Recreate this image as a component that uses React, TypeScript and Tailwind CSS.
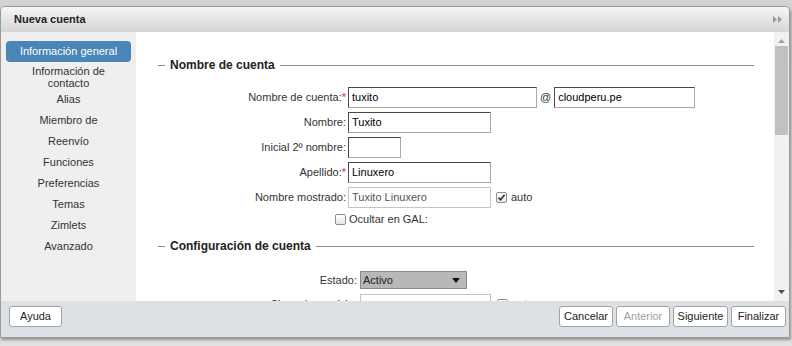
import type { ReactNode } from "react";

const navItems = [
  "Alias",
  "Miembro de",
  "Reenvío",
  "Funciones",
  "Preferencias",
  "Temas",
  "Zimlets",
  "Avanzado",
];

function Legend({ children }: { children: ReactNode }) {
  return (
    <div className="flex h-[14px] items-center">
      <div className="h-px w-[7px] bg-[#8c8c8c]" />
      <div className="px-[5px] text-[12px] font-bold leading-[14px] text-[#222]">
        {children}
      </div>
      <div className="h-px flex-1 bg-[#8c8c8c]" />
    </div>
  );
}

function TextBox({
  width,
  value,
  muted,
}: {
  width: string;
  value?: string;
  muted?: boolean;
}) {
  return (
    <div
      className={`flex h-[21px] items-center border pl-[3px] ${width} ${
        muted
          ? "border-[#c4c4c4] text-[#555]"
          : "border-[#a9a9a9] border-t-[#4a4a4a] border-l-[#4a4a4a] text-black"
      } bg-white`}
    >
      {value}
    </div>
  );
}

function Check({ checked }: { checked?: boolean }) {
  return (
    <span className="relative inline-flex h-[11px] w-[11px] shrink-0 items-center justify-center rounded-[2px] border border-[#8e8e8e] bg-gradient-to-b from-white to-[#e6e6e6]">
      {checked ? (
        <svg width="9" height="9" viewBox="0 0 9 9">
          <path
            d="M1.5 4.6 L3.6 6.8 L7.6 1.8"
            fill="none"
            stroke="#333"
            strokeWidth="1.6"
          />
        </svg>
      ) : null}
    </span>
  );
}

function Row({
  label,
  required,
  children,
}: {
  label: string;
  required?: boolean;
  children: ReactNode;
}) {
  return (
    <div className="mb-[4px] flex h-[21px] items-center">
      <div className="w-[188px] text-right text-[#333]">
        {label}
        {required ? <span className="text-[#d0302b]">*</span> : null}
      </div>
      <div className="ml-[2px] flex items-center">{children}</div>
    </div>
  );
}

function Button({
  children,
  width,
  disabled,
}: {
  children: ReactNode;
  width: string;
  disabled?: boolean;
}) {
  return (
    <div
      className={`flex h-[21px] items-center justify-center rounded-[3px] border border-[#a3a3a3] bg-white ${width} ${
        disabled ? "text-[#a0a0a0]" : "text-[#222]"
      }`}
    >
      {children}
    </div>
  );
}

export default function App() {
  return (
    <div
      className="h-[346px] w-[792px] overflow-hidden bg-gradient-to-b from-[#d2d2d2] to-[#e2e2e2] pt-[6px] text-[11px] leading-[13px] text-[#333]"
      style={{ fontFamily: '"Liberation Sans", Arial, sans-serif' }}
    >
      <div className="flex h-[332px] w-[790px] flex-col overflow-hidden rounded-t-[5px] border border-[#9a9a9a] shadow-[1px_2px_3px_rgba(0,0,0,0.35)]">
        {/* header */}
        <div className="flex h-[25px] shrink-0 items-center justify-between bg-gradient-to-b from-[#f6f6f6] to-[#d5d5d5] pl-[13px] pr-[7px]">
          <span className="font-bold text-[#222]">Nueva cuenta</span>
          <svg width="9" height="7" viewBox="0 0 9 7">
            <path d="M0 0 L4 3.5 L0 7 Z M5 0 L9 3.5 L5 7 Z" fill="#9a9a9a" />
          </svg>
        </div>

        {/* body */}
        <div className="flex h-[269px] shrink-0">
          <div className="w-[135px] shrink-0 bg-[#efefef] px-[5px] pt-[9px] text-center text-[#333]">
            <div className="flex h-[21px] items-center justify-center rounded-[4px] bg-[#4a85b7] text-white">
              Información general
            </div>
            <div className="h-[27px] pt-[3px] leading-[12px]">
              Información de
              <br />
              contacto
            </div>
            {navItems.map((item) => (
              <div key={item} className="flex h-[21px] items-center justify-center">
                {item}
              </div>
            ))}
          </div>

          <div className="flex-1 overflow-hidden bg-white pl-[22px] pr-[20px] pt-[26px]">
            <Legend>Nombre de cuenta</Legend>
            <div className="mt-[15px]">
              <Row label="Nombre de cuenta:" required>
                <TextBox width="w-[189px]" value="tuxito" />
                <span className="mx-[3px] text-[#333]">@</span>
                <TextBox width="w-[141px]" value="cloudperu.pe" />
              </Row>
              <Row label="Nombre:">
                <TextBox width="w-[143px]" value="Tuxito" />
              </Row>
              <Row label="Inicial 2º nombre:">
                <TextBox width="w-[53px]" />
              </Row>
              <Row label="Apellido:" required>
                <TextBox width="w-[143px]" value="Linuxero" />
              </Row>
              <Row label="Nombre mostrado:">
                <TextBox width="w-[143px]" value="Tuxito Linuxero" muted />
                <span className="ml-[5px] flex items-center gap-[4px]">
                  <Check checked />
                  auto
                </span>
              </Row>
              <div className="flex h-[14px] items-center">
                <div className="flex w-[188px] justify-end">
                  <Check />
                </div>
                <span className="ml-[3px]">Ocultar en GAL:</span>
              </div>
            </div>

            <div className="mt-[13px]">
              <Legend>Configuración de cuenta</Legend>
            </div>
            <div className="mt-[18px] flex h-[18px] items-center">
              <div className="w-[199px] text-right">Estado:</div>
              <div className="ml-[3px] flex h-[18px] w-[107px] items-center justify-between border border-[#8a8a8a] bg-[#b8b8b8] pl-[2px] pr-[6px] text-[#222]">
                Activo
                <svg width="8" height="5" viewBox="0 0 8 5">
                  <path d="M0 0 L8 0 L4 5 Z" fill="#111" />
                </svg>
              </div>
            </div>
            <div className="mt-[5px] flex h-[21px] items-center">
              <div className="w-[199px] text-right">Clase de servicio:</div>
              <div className="ml-[3px] h-[21px] w-[131px] border border-[#c4c4c4] bg-white" />
              <span className="ml-[6px] flex items-center gap-[4px]">
                <Check checked />
                auto
              </span>
            </div>
          </div>

          {/* scrollbar */}
          <div className="flex w-[15px] shrink-0 flex-col items-center bg-[#f1f1f1]">
            <svg className="mt-[7px]" width="7" height="4" viewBox="0 0 7 4">
              <path d="M0 4 L3.5 0 L7 4 Z" fill="#a3a3a3" />
            </svg>
            <div className="mt-[3px] h-[89px] w-[13px] bg-[#c1c1c1]" />
            <div className="flex-1" />
            <svg className="mb-[7px]" width="7" height="4" viewBox="0 0 7 4">
              <path d="M0 0 L7 0 L3.5 4 Z" fill="#505050" />
            </svg>
          </div>
        </div>

        {/* footer */}
        <div className="flex flex-1 items-start justify-between bg-[#dde1e6] pl-[8px] pr-[3px] pt-[5px]">
          <Button width="w-[53px]">Ayuda</Button>
          <div className="flex gap-[3px]">
            <Button width="w-[54px]">Cancelar</Button>
            <Button width="w-[54px]" disabled>
              Anterior
            </Button>
            <Button width="w-[55px]">Siguiente</Button>
            <Button width="w-[55px]">Finalizar</Button>
          </div>
        </div>
      </div>
    </div>
  );
}
